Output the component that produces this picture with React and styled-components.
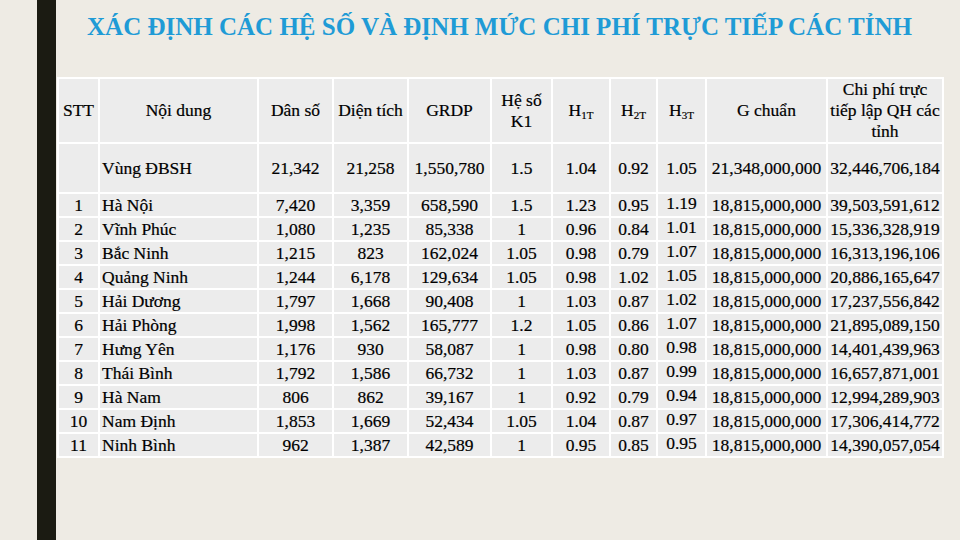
import React from 'react'
import styled, { createGlobalStyle } from 'styled-components'

const serif = `'Liberation Serif', 'Times New Roman', serif`;

const GlobalStyle = createGlobalStyle`
    html, body {
        margin: 0;
        padding: 0;
        background: #eeebe4;
    }
    body {
        font-family: ${serif};
        color: #000;
    }
`;

const Page = styled.div`
    display: flex;
    width: 960px;
    height: 540px;
    overflow: hidden;
    background: #eeebe4;
    font-family: ${serif};
`;

const SideBar = styled.div`
    flex: 0 0 19px;
    margin-left: 37px;
    background: #1b1b12;
`;

const Main = styled.div`
    flex: 1;
    display: flex;
    flex-direction: column;
`;

const Title = styled.h1`
    margin: 0;
    padding: 12px 17px 0 0;
    height: 77px;
    box-sizing: border-box;
    text-align: center;
    font-family: ${serif};
    font-size: 25px;
    font-weight: bold;
    line-height: 30px;
    color: #1f9bd6;
    white-space: nowrap;
`;

const Table = styled.table`
    border-collapse: separate;
    border-spacing: 2px;
    background: #ffffff;
    table-layout: fixed;
    width: 887px;
    margin-left: 1px;
`;

const Cell = styled.td`
    background: #ececec;
    padding: 0;
    padding-bottom: ${p => (p.$raise ? '4px' : '0')};
    padding-left: ${p => (p.$left ? '2px' : '0')};
    text-align: ${p => (p.$left ? 'left' : 'center')};
    vertical-align: middle;
    white-space: nowrap;
    font-family: ${serif};
    font-size: 17.5px;
    color: #000;
    -webkit-text-stroke: 0.2px #000;
    line-height: ${p => (p.$raise ? '18px' : '21px')};
    height: ${p => p.$h || 22}px;
    box-sizing: border-box;
`;

const HeadCell = styled(Cell).attrs({ as: 'th' })`
    font-weight: normal;
    height: 63px;
`;

const Sub = styled.sub`
    font-size: 11px;
    vertical-align: -3px;
    line-height: 0;
`;

const widths = [39, 157, 73, 73, 81, 59, 56, 45, 47, 119, 114];

const rows = [
    ['1', 'Hà Nội', '7,420', '3,359', '658,590', '1.5', '1.23', '0.95', '1.19', '18,815,000,000', '39,503,591,612'],
    ['2', 'Vĩnh Phúc', '1,080', '1,235', '85,338', '1', '0.96', '0.84', '1.01', '18,815,000,000', '15,336,328,919'],
    ['3', 'Bắc Ninh', '1,215', '823', '162,024', '1.05', '0.98', '0.79', '1.07', '18,815,000,000', '16,313,196,106'],
    ['4', 'Quảng Ninh', '1,244', '6,178', '129,634', '1.05', '0.98', '1.02', '1.05', '18,815,000,000', '20,886,165,647'],
    ['5', 'Hải Dương', '1,797', '1,668', '90,408', '1', '1.03', '0.87', '1.02', '18,815,000,000', '17,237,556,842'],
    ['6', 'Hải Phòng', '1,998', '1,562', '165,777', '1.2', '1.05', '0.86', '1.07', '18,815,000,000', '21,895,089,150'],
    ['7', 'Hưng Yên', '1,176', '930', '58,087', '1', '0.98', '0.80', '0.98', '18,815,000,000', '14,401,439,963'],
    ['8', 'Thái Bình', '1,792', '1,586', '66,732', '1', '1.03', '0.87', '0.99', '18,815,000,000', '16,657,871,001'],
    ['9', 'Hà Nam', '806', '862', '39,167', '1', '0.92', '0.79', '0.94', '18,815,000,000', '12,994,289,903'],
    ['10', 'Nam Định', '1,853', '1,669', '52,434', '1.05', '1.04', '0.87', '0.97', '18,815,000,000', '17,306,414,772'],
    ['11', 'Ninh Bình', '962', '1,387', '42,589', '1', '0.95', '0.85', '0.95', '18,815,000,000', '14,390,057,054'],
];

const region = ['', 'Vùng ĐBSH', '21,342', '21,258', '1,550,780', '1.5', '1.04', '0.92', '1.05', '21,348,000,000', '32,446,706,184'];

export default function App() {
    return (
        <>
            <GlobalStyle />
            <Page>
                <SideBar />
                <Main>
                    <Title>XÁC ĐỊNH CÁC HỆ SỐ VÀ ĐỊNH MỨC CHI PHÍ TRỰC TIẾP CÁC TỈNH</Title>
                    <Table>
                        <colgroup>
                            {widths.map((w, i) => <col key={i} style={{ width: w }} />)}
                        </colgroup>
                        <thead>
                            <tr>
                                <HeadCell>STT</HeadCell>
                                <HeadCell>Nội dung</HeadCell>
                                <HeadCell>Dân số</HeadCell>
                                <HeadCell>Diện tích</HeadCell>
                                <HeadCell>GRDP</HeadCell>
                                <HeadCell>Hệ số<br />K1</HeadCell>
                                <HeadCell>H<Sub>1T</Sub></HeadCell>
                                <HeadCell>H<Sub>2T</Sub></HeadCell>
                                <HeadCell>H<Sub>3T</Sub></HeadCell>
                                <HeadCell>G chuẩn</HeadCell>
                                <HeadCell>Chi phí trực<br />tiếp lập QH các<br />tỉnh</HeadCell>
                            </tr>
                        </thead>
                        <tbody>
                            <tr>
                                {region.map((v, i) => (
                                    <Cell key={i} $h={48} $left={i === 1}>{v}</Cell>
                                ))}
                            </tr>
                            {rows.map(r => (
                                <tr key={r[0]}>
                                    {r.map((v, i) => (
                                        <Cell key={i} $left={i === 1} $raise={i === 8}>{v}</Cell>
                                    ))}
                                </tr>
                            ))}
                        </tbody>
                    </Table>
                </Main>
            </Page>
        </>
    )
}
